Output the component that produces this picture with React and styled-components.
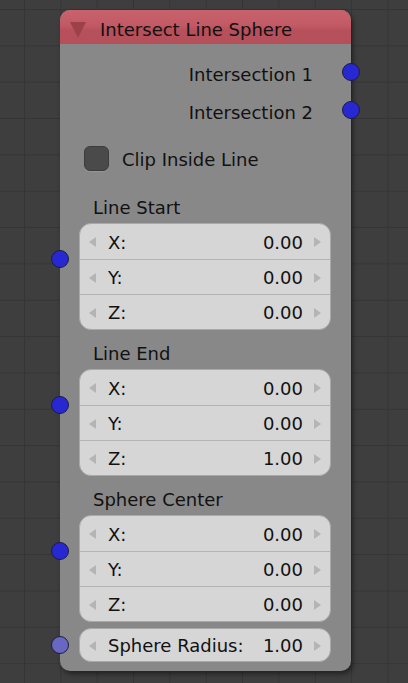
import React from "react";
import styled, { createGlobalStyle } from "styled-components";

const Global = createGlobalStyle`
  html, body { margin: 0; padding: 0; }
  body { font-family: "DejaVu Sans", "Liberation Sans", sans-serif; background: #3e3e3e; }
`;

const Canvas = styled.div`
  width: 408px;
  height: 683px;
  overflow: hidden;
  box-sizing: border-box;
  padding: 10px 0 0 60px;
  background-color: #3e3e3e;
  background-image:
    linear-gradient(to right, #353535 1px, transparent 1px),
    linear-gradient(to bottom, #353535 1px, transparent 1px);
  background-size: 36.35px 36.35px;
  background-position: 24px 9px;
`;

const Node = styled.div`
  width: 291px;
  border-radius: 10px;
  background: #888888;
  box-shadow: 2px 3px 5px rgba(0, 0, 0, 0.45);
  color: #111;
  font-size: 18px;
`;

const Header = styled.div`
  height: 34px;
  box-sizing: border-box;
  padding: 4px 0 0 10px;
  border-radius: 10px 10px 0 0;
  background: linear-gradient(to bottom, #c8626c 0%, #c15a65 45%, #b6505b 60%, #b5505a 100%);
  display: flex;
  align-items: center;
  gap: 14px;
`;

const Collapse = styled.span`
  width: 0;
  height: 0;
  border-left: 8.5px solid transparent;
  border-right: 8.5px solid transparent;
  border-top: 16px solid #9e404a;
  margin-top: 2px;
`;

const Title = styled.span`
  font-size: 18px;
  color: #111;
  white-space: nowrap;
`;

const Body = styled.div`
  padding: 10px 20px 9px 19px;
  display: flex;
  flex-direction: column;
`;

const OutputRow = styled.div`
  position: relative;
  height: 38px;
  box-sizing: border-box;
  padding: 3px 18px 0 0;
  display: flex;
  align-items: center;
  justify-content: flex-end;
`;

const Socket = styled.span`
  position: absolute;
  top: ${(p) => (p.$at ? `${p.$at}px` : "50%")};
  width: 18px;
  height: 18px;
  margin-top: -9px;
  border-radius: 50%;
  box-sizing: border-box;
  border: 1px solid #1c1c44;
  background: ${(p) => (p.$dim ? "#6868c0" : "#2828d2")};
  ${(p) => (p.$side === "right" ? "right: -29px;" : "left: -28px;")}
`;

const OutSocket = styled(Socket)`
  margin-top: -10.5px;
`;

const CheckRow = styled.div`
  margin-top: 9px;
  height: 38px;
  display: flex;
  align-items: center;
  gap: 13px;
  padding-left: 5px;
`;

const CheckBox = styled.span`
  width: 25px;
  height: 25px;
  box-sizing: border-box;
  border-radius: 6px;
  background: #4a4a4a;
  border: 1px solid #3c3c3c;
  box-shadow: 0 1px 0 rgba(255, 255, 255, 0.12);
`;

const CheckText = styled.span`
  padding-top: 3px;
`;

const Label = styled.div`
  margin-top: ${(p) => p.$top}px;
  height: 30px;
  display: flex;
  align-items: center;
  padding-left: 14px;
`;

const Group = styled.div`
  position: relative;
  margin-top: ${(p) => p.$top || 1}px;
`;

const Box = styled.div`
  border-radius: 12px;
  background: #d6d6d6;
  border: 1px solid #a9a9a9;
  box-sizing: border-box;
  overflow: hidden;
`;

const Field = styled.div`
  height: ${(p) => p.$h || 35}px;
  display: flex;
  align-items: center;
  padding: 1px 9px 0 9px;
  box-sizing: border-box;
  & + & {
    border-top: 1px solid #b3b3b3;
  }
`;

const Arrow = styled.span`
  width: 0;
  height: 0;
  border-top: 5.5px solid transparent;
  border-bottom: 5.5px solid transparent;
  ${(p) =>
    p.$dir === "left"
      ? "border-right: 7px solid #b4b4b4; margin-right: 12px;"
      : "border-left: 7px solid #b4b4b4; margin-left: 11px;"}
`;

const FieldName = styled.span`
  flex: 1;
  white-space: nowrap;
`;

const FieldValue = styled.span`
  white-space: nowrap;
`;

function NumField({ name, value, h }) {
  return (
    <Field $h={h}>
      <Arrow $dir="left" />
      <FieldName>{name}</FieldName>
      <FieldValue>{value}</FieldValue>
      <Arrow $dir="right" />
    </Field>
  );
}

function VectorInput({ label, labelTop, values }) {
  return (
    <>
      <Label $top={labelTop}>{label}</Label>
      <Group>
        <Socket $side="left" $at={36} />
        <Box>
          <NumField name="X:" value={values[0]} />
          <NumField name="Y:" value={values[1]} />
          <NumField name="Z:" value={values[2]} />
        </Box>
      </Group>
    </>
  );
}

export default function App() {
  return (
    <>
      <Global />
      <Canvas>
        <Node>
          <Header>
            <Collapse />
            <Title>Intersect Line Sphere</Title>
          </Header>
          <Body>
            <OutputRow>
              Intersection 1
              <OutSocket $side="right" />
            </OutputRow>
            <OutputRow>
              Intersection 2
              <OutSocket $side="right" />
            </OutputRow>
            <CheckRow>
              <CheckBox />
              <CheckText>Clip Inside Line</CheckText>
            </CheckRow>
            <VectorInput label="Line Start" labelTop={15} values={["0.00", "0.00", "0.00"]} />
            <VectorInput label="Line End" labelTop={8} values={["0.00", "0.00", "1.00"]} />
            <VectorInput label="Sphere Center" labelTop={8} values={["0.00", "0.00", "0.00"]} />
            <Group $top={6}>
              <Socket $side="left" $dim />
              <Box>
                <NumField name="Sphere Radius:" value="1.00" h={32} />
              </Box>
            </Group>
          </Body>
        </Node>
      </Canvas>
    </>
  );
}
